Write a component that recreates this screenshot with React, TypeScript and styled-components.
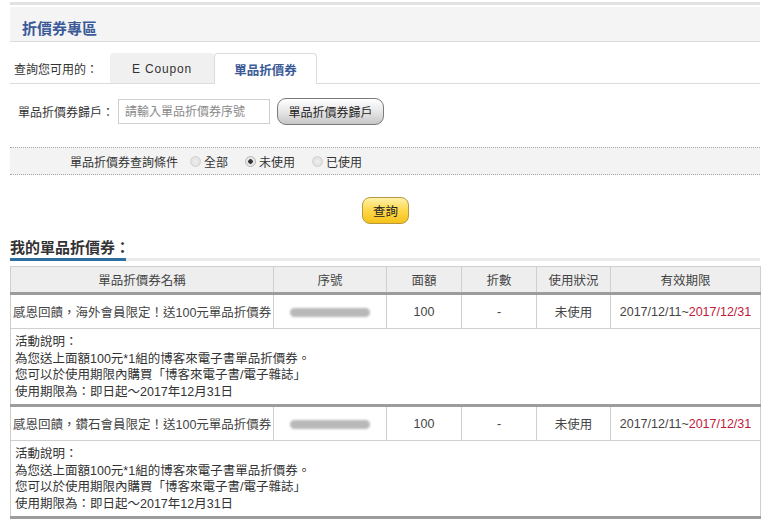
import React, { useState } from "react";
import styled, { createGlobalStyle } from "styled-components";

const GlobalStyle = createGlobalStyle`
  html, body {
    margin: 0;
    padding: 0;
    background: #fff;
    font-family: "Liberation Sans", "Noto Sans CJK TC", sans-serif;
    font-size: 12px;
    color: #333;
  }
`;

const Page = styled.div`
  width: 750px;
  padding: 2px 4px 0 10px;
`;

const TopLine = styled.div`
  height: 3px;
  background: #e2e2e2;
`;

const HeaderPanel = styled.div`
  margin-top: 2px;
  height: 35px;
  background: #f4f4f4;
  border-bottom: 1px solid #dcdcdc;
  display: flex;
  align-items: center;
  padding-left: 12px;
  padding-top: 6px;
  box-sizing: border-box;
  font-size: 15px;
  font-weight: bold;
  color: #3b5a98;
`;

const TabRow = styled.div`
  margin-top: 9px;
  height: 32px;
  display: flex;
  align-items: flex-end;
  border-bottom: 1px solid #dcdcdc;
`;

const TabLabel = styled.span`
  width: 96px;
  padding-left: 4px;
  align-self: center;
  margin-top: 2px;
  white-space: nowrap;
`;

const Tab = styled.div<{ $active?: boolean }>`
  width: ${(p) => (p.$active ? "103px" : "104px")};
  height: ${(p) => (p.$active ? "31px" : "30px")};
  margin-bottom: ${(p) => (p.$active ? "-1px" : "0")};
  box-sizing: border-box;
  display: flex;
  align-items: center;
  justify-content: center;
  border-radius: 4px 4px 0 0;
  background: ${(p) => (p.$active ? "#fff" : "#f0f0f0")};
  border: 1px solid ${(p) => (p.$active ? "#dcdcdc" : "#f0f0f0")};
  border-bottom: none;
  color: ${(p) => (p.$active ? "#3b5a98" : "#333")};
  font-weight: ${(p) => (p.$active ? "bold" : "normal")};
  font-size: ${(p) => (p.$active ? "12.5px" : "12px")};
  letter-spacing: ${(p) => (p.$active ? "0" : "0.8px")};
`;

const RedeemRow = styled.div`
  margin-top: 14px;
  display: flex;
  align-items: center;
  padding-left: 8px;
  height: 27px;
`;

const RedeemLabel = styled.span`
  width: 100px;
  white-space: nowrap;
`;

const TextInput = styled.input`
  width: 152px;
  height: 25px;
  box-sizing: border-box;
  border: 1px solid #cfcfcf;
  padding: 0 6px;
  font-family: inherit;
  font-size: 12px;
  color: #333;
  &::placeholder {
    color: #888;
  }
`;

const GrayButton = styled.button`
  margin-left: 7px;
  width: 107px;
  height: 27px;
  border: 1px solid #7a7a7a;
  border-radius: 9px;
  background: linear-gradient(#ffffff, #e4e4e4 55%, #c6c6c6);
  font-family: inherit;
  font-size: 12px;
  color: #222;
  padding: 0;
`;

const FilterRow = styled.div`
  margin-top: 22px;
  height: 26px;
  border-top: 1px dotted #a8a8a8;
  border-bottom: 1px dotted #a8a8a8;
  background: #f3f3f3;
  display: flex;
  align-items: center;
  padding-left: 60px;
`;

const FilterLabel = styled.span`
  margin-right: 12px;
`;

const RadioLabel = styled.label`
  display: inline-flex;
  align-items: center;
  margin-right: 17px;
  color: #333;
`;

const RadioDot = styled.span<{ $checked?: boolean }>`
  width: 11px;
  height: 11px;
  border-radius: 50%;
  margin-right: 3px;
  box-sizing: border-box;
  border: 1px solid ${(p) => (p.$checked ? "#b8b8b8" : "#d2d2d2")};
  background: ${(p) =>
    p.$checked
      ? "radial-gradient(circle, #333 0 2px, #e6e6e6 2.5px)"
      : "radial-gradient(circle, #efefef, #dadada)"};
`;

const QueryWrap = styled.div`
  margin-top: 22px;
  display: flex;
  padding-left: 352px;
`;

const YellowButton = styled.button`
  width: 47px;
  height: 27px;
  border: 1px solid #b8983e;
  border-radius: 8px;
  background: linear-gradient(#fff1a8, #fdd84a 50%, #f5c21a);
  font-family: inherit;
  font-size: 12.5px;
  color: #222;
  padding: 0;
`;

const SectionTitle = styled.h2`
  margin: 15px 0 0;
  font-size: 15px;
  font-weight: bold;
  color: #333;
  line-height: 18px;
`;

const TitleRule = styled.div`
  margin-top: 1px;
  height: 3px;
  background: #ebebeb;
  display: flex;
`;

const RuleAccent = styled.div`
  width: 116px;
  background: #2f6f9f;
`;

const Table = styled.table`
  margin-top: 5px;
  width: 750px;
  border-collapse: collapse;
  table-layout: fixed;
  font-size: 12.5px;
`;

const Th = styled.th`
  height: 25px;
  background: #eeeeee;
  border: 1px solid #cfcfcf;
  border-bottom: 3px solid #9c9c9c;
  font-weight: normal;
  color: #444;
  padding: 0;
`;

const Td = styled.td<{ $left?: boolean }>`
  height: 33px;
  border: 1px solid #cfcfcf;
  text-align: ${(p) => (p.$left ? "left" : "center")};
  padding: 0 0 0 ${(p) => (p.$left ? "2px" : "0")};
  color: #444;
  white-space: nowrap;
  overflow: hidden;
`;

const NoteCell = styled.td`
  height: 70px;
  border: 1px solid #cfcfcf;
  border-bottom: 3px solid #9c9c9c;
  padding: 5px 0 0 4px;
  vertical-align: top;
  line-height: 16.5px;
  color: #333;
`;

const Redacted = styled.span`
  display: inline-block;
  width: 80px;
  height: 9px;
  border-radius: 5px;
  background: #b9b9b9;
  filter: blur(0.8px);
  vertical-align: middle;
`;

const Expire = styled.span`
  color: #c01a3a;
`;

const coupons = [
  { name: "感恩回饋，海外會員限定！送100元單品折價券" },
  { name: "感恩回饋，鑽石會員限定！送100元單品折價券" },
];

const filters = ["全部", "未使用", "已使用"];

export default function App() {
  const [filter, setFilter] = useState(1);

  return (
    <>
      <GlobalStyle />
      <Page>
        <TopLine />
        <HeaderPanel>折價券專區</HeaderPanel>

        <TabRow>
          <TabLabel>查詢您可用的：</TabLabel>
          <Tab>E Coupon</Tab>
          <Tab $active>單品折價券</Tab>
        </TabRow>

        <RedeemRow>
          <RedeemLabel>單品折價券歸戶：</RedeemLabel>
          <TextInput placeholder="請輸入單品折價券序號" />
          <GrayButton>單品折價券歸戶</GrayButton>
        </RedeemRow>

        <FilterRow>
          <FilterLabel>單品折價券查詢條件</FilterLabel>
          {filters.map((f, i) => (
            <RadioLabel key={f} onClick={() => setFilter(i)}>
              <RadioDot $checked={filter === i} />
              {f}
            </RadioLabel>
          ))}
        </FilterRow>

        <QueryWrap>
          <YellowButton>查詢</YellowButton>
        </QueryWrap>

        <SectionTitle>我的單品折價券：</SectionTitle>
        <TitleRule>
          <RuleAccent />
        </TitleRule>

        <Table>
          <colgroup>
            <col style={{ width: 263 }} />
            <col style={{ width: 113 }} />
            <col style={{ width: 75 }} />
            <col style={{ width: 75 }} />
            <col style={{ width: 74 }} />
            <col style={{ width: 150 }} />
          </colgroup>
          <thead>
            <tr>
              <Th>單品折價券名稱</Th>
              <Th>序號</Th>
              <Th>面額</Th>
              <Th>折數</Th>
              <Th>使用狀況</Th>
              <Th>有效期限</Th>
            </tr>
          </thead>
          <tbody>
            {coupons.map((c) => (
              <React.Fragment key={c.name}>
                <tr>
                  <Td $left>{c.name}</Td>
                  <Td>
                    <Redacted />
                  </Td>
                  <Td>100</Td>
                  <Td>-</Td>
                  <Td>未使用</Td>
                  <Td>
                    2017/12/11~<Expire>2017/12/31</Expire>
                  </Td>
                </tr>
                <tr>
                  <NoteCell colSpan={6}>
                    活動說明：
                    <br />
                    為您送上面額100元*1組的博客來電子書單品折價券。
                    <br />
                    您可以於使用期限內購買「博客來電子書/電子雜誌」
                    <br />
                    使用期限為：即日起～2017年12月31日
                  </NoteCell>
                </tr>
              </React.Fragment>
            ))}
          </tbody>
        </Table>
      </Page>
    </>
  );
}
